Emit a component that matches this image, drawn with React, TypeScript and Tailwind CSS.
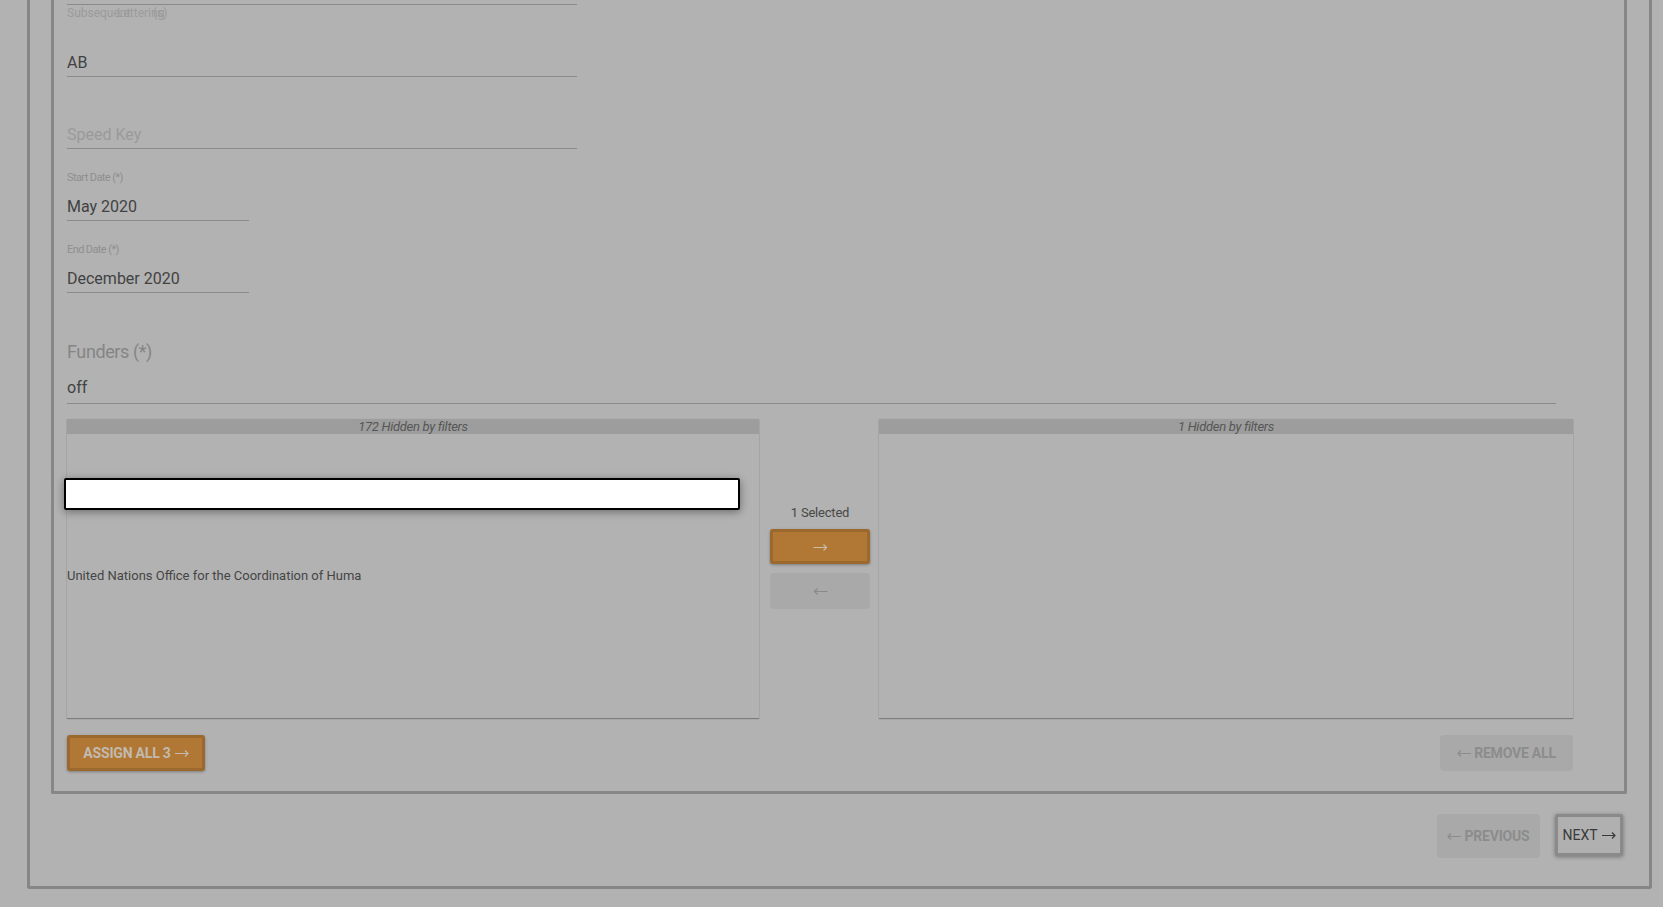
import React from "react";

// Dimmed wizard step: funders assignment with dual list box
const Arrow = ({ dir, w = 14 }: { dir: "l" | "r"; w?: number }) => (
  <svg width={w} height="8" viewBox="0 0 14 8" fill="none" stroke="currentColor" strokeWidth="1.2">
    {dir === "r" ? <path d="M0 4.5h13M10 1.5l3 3-3 3" /> : <path d="M14 4.5H1M4 1.5l-3 3 3 3" />}
  </svg>
);

const Field = ({
  label,
  value,
  placeholder,
  width,
  labelTop = 23,
}: {
  label?: React.ReactNode;
  value?: string;
  placeholder?: string;
  width: string;
  labelTop?: number;
}) => (
  <div className={`flex h-[72px] flex-col border-b border-[#8a8a8a] ${width}`}>
    {label && (
      <div
        style={{ marginTop: labelTop }}
        className="h-[12px] whitespace-nowrap text-[11px] leading-[12px] tracking-[-0.6px] text-[#8f8f8f]"
      >
        {label}
      </div>
    )}
    <div
      className={`mt-auto pb-[1px] text-[16px] leading-[24px] ${
        value ? "text-[#424242]" : "text-[#9a9a9a]"
      }`}
    >
      {value ?? placeholder}
    </div>
  </div>
);

const ListBox = ({ hidden, width, children }: { hidden: string; width: string; children?: React.ReactNode }) => (
  <div className={`flex h-[299px] flex-col shadow-[0_1px_1px_rgba(0,0,0,0.28),0_0_1px_rgba(0,0,0,0.12)] ${width}`}>
    <div className="h-[15px] bg-[#9d9d9d] text-center text-[13px] italic leading-[15px] tracking-[-0.3px] text-[#565656]">
      {hidden}
    </div>
    {children}
  </div>
);

export default function App() {
  return (
    <div className="h-[907px] overflow-hidden bg-[#b2b2b2] font-['Roboto','Liberation_Sans',sans-serif]">
      <div className="ml-[27px] w-[1625px] rounded-b-[3px] border-[3px] border-t-0 border-[#868686] pb-[28px] pl-[21px] pr-[22px]">
        <div className="w-[1576px] rounded-b-[2px] border-[3px] border-t-0 border-[#878787] pb-[20px] pl-[13px]">
          <div className="h-[5px] w-[510px] border-b border-[#8a8a8a]" />
          <Field
            width="w-[510px]"
            labelTop={2}
            value="AB"
            label={
              <span className="text-[12px] tracking-normal text-[#9b9b9b]">
                <span className="inline-block w-[50px]">Subsequent</span>
                <span className="inline-block w-[36px]">Lettering</span>
                <span className="inline-block">(s)</span>
              </span>
            }
          />
          <Field width="w-[510px]" placeholder="Speed Key" />
          <Field width="w-[182px]" label="Start Date (*)" value="May 2020" />
          <Field width="w-[182px]" label="End Date (*)" value="December 2020" />

          <div className="mt-[47px] text-[18px] leading-[24px] tracking-[-0.4px] text-[#858585]">Funders (*)</div>
          <div className="mt-[12px] w-[1489px] border-b border-[#8a8a8a] pb-[3px] text-[16px] leading-[24px] text-[#424242]">
            off
          </div>

          <div className="mt-[15px] flex w-[1506px]">
            <ListBox hidden="172 Hidden by filters" width="w-[692px]">
              <div className="ml-[-3px] mt-[44px] h-[32px] w-[676px] rounded-[2px] border-2 border-black bg-white shadow-[0_2px_8px_rgba(0,0,0,0.4)]" />
              <div className="mt-[57px] whitespace-nowrap text-[13px] leading-[18px] text-[#454545]">
                United Nations Office for the Coordination of Huma
              </div>
            </ListBox>
            <div className="flex w-[120px] flex-col items-center pt-[86px] pl-[2px]">
              <div className="text-[13px] leading-[16px] tracking-[-0.2px] text-[#484848]">1 Selected</div>
              <button className="mt-[8px] flex h-[35px] w-[100px] items-center justify-center rounded-[3px] border-[3px] border-[#9b682e] bg-[#b07834] text-[#c9bca9] shadow-[0_1px_3px_rgba(0,0,0,0.3)]">
                <Arrow dir="r" w={15} />
              </button>
              <button className="mt-[9px] flex h-[36px] w-[100px] items-center justify-center rounded-[4px] bg-[#a9a9a9] text-[#8a8a8a]">
                <Arrow dir="l" w={15} />
              </button>
            </div>
            <ListBox hidden="1 Hidden by filters" width="w-[694px]" />
          </div>

          <div className="mt-[17px] flex w-[1506px] items-center justify-between">
            <button className="flex h-[36px] w-[138px] items-center justify-center gap-[4px] rounded-[3px] border-[3px] border-[#9b682e] bg-[#b07834] text-[14px] font-bold tracking-[-0.2px] text-[#c2bab0] shadow-[0_1px_3px_rgba(0,0,0,0.3)]">
              ASSIGN ALL 3 <Arrow dir="r" />
            </button>
            <button className="flex h-[36px] w-[133px] items-center justify-center gap-[3px] rounded-[4px] bg-[#a9a9a9] text-[14px] font-bold tracking-[-0.2px] text-[#8c8c8c]">
              <Arrow dir="l" /> REMOVE ALL
            </button>
          </div>
        </div>

        <div className="mt-[20px] flex justify-end gap-[15px] pr-[4px]">
          <button className="flex h-[44px] w-[103px] items-center justify-center gap-[3px] rounded-[4px] bg-[#a9a9a9] text-[14px] font-bold tracking-[-0.2px] text-[#8c8c8c]">
            <Arrow dir="l" /> PREVIOUS
          </button>
          <button className="flex h-[42px] w-[68px] items-center justify-center gap-[4px] rounded-[2px] border-[3px] border-[#8a8a8a] bg-[#b0b0b0] text-[14px] text-[#3a3a3a] shadow-[0_1px_4px_rgba(0,0,0,0.35)]">
            NEXT <Arrow dir="r" />
          </button>
        </div>
      </div>
    </div>
  );
}
